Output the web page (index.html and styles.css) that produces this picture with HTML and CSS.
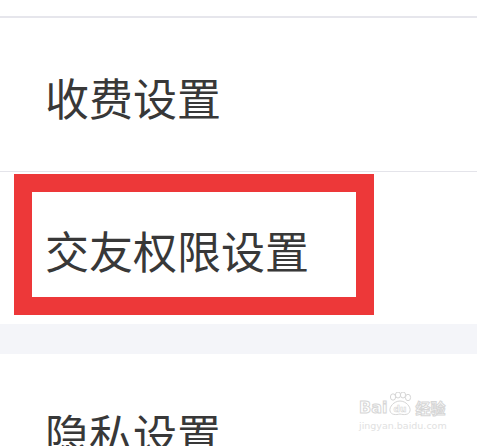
FILE: index.html
```html
<!DOCTYPE html>
<html lang="zh-CN">

<head>
    <meta charset="UTF-8">
    <meta name="viewport" content="width=device-width, initial-scale=1.0">
    <title>设置</title>
    <link rel="stylesheet" href="styles.css">
</head>

<body>
    <main class="list">
        <div class="top"></div>
        <div class="item">收费设置</div>
        <div class="item marked">
            交友权限设置
            <span class="mark"></span>
        </div>
        <div class="gap"></div>
        <div class="item">隐私设置</div>
    </main>
    <div class="watermark">
        <div class="brand">
            <span class="bai">Bai</span>
            <span class="paw">
                <svg width="26" height="24" viewBox="0 0 26 24">
                    <g fill="#fff" stroke="#d6d6d6" stroke-width="1">
                        <ellipse cx="6" cy="5" rx="2.6" ry="3.2" />
                        <ellipse cx="11" cy="3" rx="2.6" ry="3" />
                        <ellipse cx="16" cy="3" rx="2.6" ry="3" />
                        <ellipse cx="21" cy="5.5" rx="2.6" ry="3.2" />
                        <path d="M13 9 C19 9 24 15 23 19 C22 23 17 23 13 22 C9 23 4 23 3 19 C2 15 7 9 13 9 Z" />
                    </g>
                    <text x="13" y="20" text-anchor="middle" class="du">du</text>
                </svg>
            </span>
            <span class="jy">经验</span>
        </div>
        <div class="url">jingyan.baidu.com</div>
    </div>
</body>

</html>
```

FILE: styles.css
```css
body {
    background-color: rgb(255, 255, 255);
    color: rgb(56, 56, 56);
    font-family: "Noto Sans CJK SC", "Noto Sans", sans-serif;
    margin: 0;
    padding: 0;
    overflow: hidden;
}

.list {
    display: flex;
    flex-direction: column;
}

.top {
    border-bottom: 2px solid rgb(230, 230, 236);
    height: 16px;
}

.item {
    align-items: center;
    box-sizing: border-box;
    display: flex;
    font-size: 44px;
    height: 153px;
    line-height: 44px;
    padding: 4px 0 0 45px;
}

.item + .item {
    border-top: 1px solid rgb(228, 228, 234);
}

.marked {
    position: relative;
}

.mark {
    border: 18px solid rgb(237, 56, 57);
    box-sizing: border-box;
    height: 141px;
    left: 14px;
    position: absolute;
    top: 2px;
    width: 360px;
}

.gap {
    background-color: rgb(244, 245, 249);
    height: 30px;
}

.watermark {
    color: rgb(255, 255, 255);
    left: 359px;
    position: absolute;
    top: 390px;
    width: 92px;
}

.brand {
    align-items: flex-end;
    display: flex;
    height: 26px;
}

.bai {
    font-family: "DejaVu Sans", sans-serif;
    font-size: 16px;
    font-weight: bold;
    line-height: 16px;
    -webkit-text-stroke: 1px rgb(214, 214, 214);
}

.paw svg {
    display: block;
}

.du {
    fill: #fff;
    font-family: "DejaVu Sans", sans-serif;
    font-size: 9px;
    font-weight: bold;
    stroke: #d6d6d6;
    stroke-width: 0.6;
}

.jy {
    font-size: 15px;
    font-weight: bold;
    line-height: 16px;
    margin-left: 2px;
    -webkit-text-stroke: 1px rgb(214, 214, 214);
}

.url {
    color: rgb(225, 225, 225);
    font-family: "DejaVu Sans", sans-serif;
    font-size: 9.5px;
    line-height: 14px;
    margin-top: 3px;
}
```
